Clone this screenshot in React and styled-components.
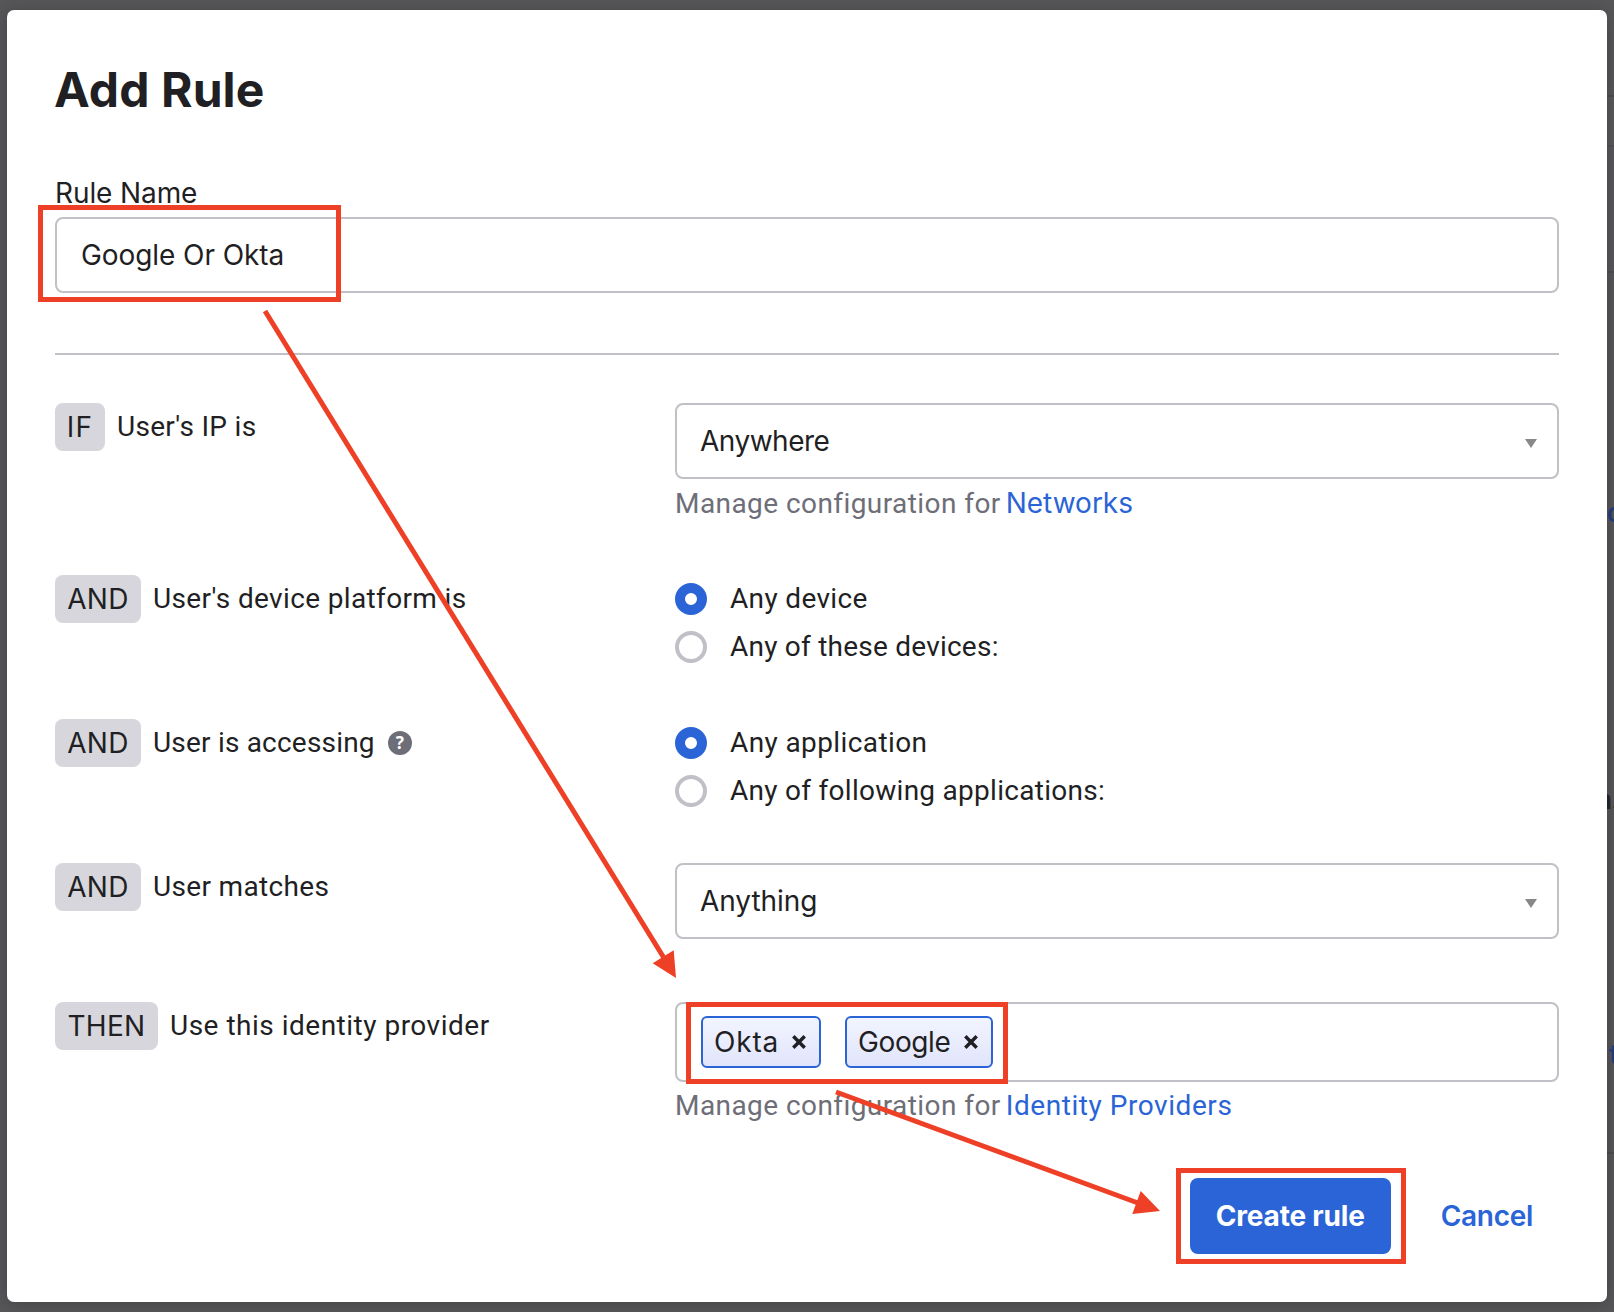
import React from "react";
import styled, { createGlobalStyle } from "styled-components";

const color = {
  text: "#1f1f24",
  muted: "#6e6e78",
  border: "#c0c0c7",
  blue: "#2a64d6",
  red: "#ee4026",
  badge: "#d7d6dc",
};

const GlobalStyle = createGlobalStyle`
  *, *::before, *::after { box-sizing: border-box; }
  html, body { margin: 0; padding: 0; background: #565658; overflow: hidden; }
  body {
    font-family: Roboto, "Liberation Sans", sans-serif;
    font-size: 28px;
    line-height: 48px;
    color: ${color.text};
    white-space: nowrap;
    -webkit-font-smoothing: antialiased;
  }
`;

const Page = styled.div`
  position: relative;
  display: flex;
  align-items: flex-start;
  width: 1614px;
  height: 1312px;
  padding-left: 7px;
  overflow: hidden;
  background: #565658;
`;

const Modal = styled.main`
  position: relative;
  z-index: 1;
  flex: none;
  width: 1600px;
  height: 1292px;
  margin-top: 10px;
  padding: 52px 48px 0;
  border-radius: 7px;
  background: #fff;
  box-shadow: 0 2px 14px rgba(0, 0, 0, 0.2);
`;

const Behind = styled.aside`
  flex: none;
  display: flex;
  flex-direction: column;
  width: 7px;
  height: 1312px;
  overflow: hidden;
`;

const Band = styled.div`
  flex: none;
  height: ${(p) => p.$h}px;
  background: ${(p) => p.$bg || "transparent"};
`;

const Fragment = styled.span`
  flex: none;
  display: block;
  height: 48px;
  margin-left: ${(p) => p.$x}px;
  font-weight: ${(p) => (p.$dark ? 700 : 500)};
  color: ${(p) => (p.$dark ? "#26262b" : "#233f78")};
`;

const Title = styled.h1`
  margin: 0 0 51px -1px;
  font: 700 48px/56px Inter, sans-serif;
  letter-spacing: 0.1px;
`;

const Txt = styled.span`
  letter-spacing: ${(p) => p.$ls || 0}px;
  ${(p) => p.$wide && "font-family: Inter, sans-serif;"}
`;

const FieldLabel = styled.label`
  display: flex;
  height: 48px;
`;

const Box = styled.div`
  display: flex;
  align-items: center;
  height: ${(p) => p.$h || 76}px;
  padding: 0 ${(p) => (p.$tags ? 24 : 20)}px 0 24px;
  border: 2px solid ${color.border};
  border-radius: 8px;
`;

const SelectBox = styled(Box)`
  justify-content: space-between;
  & > span { margin: -1px 0 0 -1px; }
`;

const Caret = styled.i`
  width: 12px;
  height: 9px;
  margin-top: 5px;
  background: #888;
  clip-path: polygon(0 0, 100% 0, 50% 100%);
`;

const Divider = styled.hr`
  height: 2px;
  margin: 60px 0 48px;
  border: 0;
  background: ${color.border};
`;

const Row = styled.section`
  display: grid;
  grid-template-columns: 620px 1fr;
  align-items: start;
  margin-bottom: ${(p) => p.$gap || 48}px;
`;

const Condition = styled.div`
  display: flex;
  align-items: center;
  height: 48px;
`;

const Badge = styled.span`
  display: flex;
  justify-content: center;
  width: ${(p) => p.$w}px;
  height: 48px;
  margin-right: 12px;
  border-radius: 8px;
  background: ${color.badge};
`;

const Help = styled.span`
  display: flex;
  align-items: center;
  justify-content: center;
  width: 24px;
  height: 24px;
  margin-left: 13px;
  border-radius: 50%;
  background: ${color.muted};
  color: #fff;
  font: 700 17px/24px "Noto Sans", sans-serif;
`;

const Hint = styled.p`
  display: flex;
  align-items: baseline;
  height: 48px;
  margin: 0;
  color: ${color.muted};
`;

const Link = styled.a`
  margin-left: 5px;
  color: ${color.blue};
`;

const Option = styled.label`
  display: flex;
  align-items: center;
  gap: 23px;
  height: 48px;
`;

const Radio = styled.span`
  width: 32px;
  height: 32px;
  border: ${(p) => (p.$on ? `10px solid ${color.blue}` : `4px solid ${color.border}`)};
  border-radius: 50%;
  background: #fff;
`;

const Tag = styled.span`
  display: flex;
  align-items: center;
  justify-content: space-between;
  width: ${(p) => p.$w}px;
  height: 52px;
  margin-right: 24px;
  padding: 0 13px 0 11px;
  border: 2px solid ${color.blue};
  border-radius: 6px;
  background: linear-gradient(#f2f4ff, #e1e5fb);
`;

const Footer = styled.footer`
  display: flex;
  justify-content: flex-end;
  align-items: center;
  padding-right: 26px;
  gap: 50px;
`;

const Button = styled.button`
  height: 76px;
  padding: 0;
  border: 0;
  border-radius: 8px;
  background: transparent;
  color: ${color.blue};
  font: 600 28px/48px Inter, sans-serif;
  letter-spacing: -0.3px;
`;

const PrimaryButton = styled(Button)`
  width: 201px;
  background: ${color.blue};
  color: #fff;
  font-weight: 700;
  letter-spacing: -0.2px;
`;

const Markup = styled.svg`
  position: absolute;
  inset: 0;
  z-index: 2;
  pointer-events: none;
`;

function TagX() {
  return (
    <svg width="14" height="14" viewBox="0 0 14 14" stroke={color.text} strokeWidth="3.4" fill="none">
      <path d="M1.3 1.2 L12.7 12.8 M12.7 1.2 L1.3 12.8" />
    </svg>
  );
}

function If({ word, w, wls, ls, children, help }) {
  return (
    <Condition>
      <Badge $w={w}><Txt $wide $ls={wls}>{word}</Txt></Badge>
      <Txt $ls={ls}>{children}</Txt>
      {help && <Help>?</Help>}
    </Condition>
  );
}

function Select({ ls, children }) {
  return (
    <SelectBox>
      <Txt $wide $ls={ls}>{children}</Txt>
      <Caret />
    </SelectBox>
  );
}

function Choice({ on, ls, children }) {
  return (
    <Option>
      <Radio $on={on} />
      <Txt $ls={ls}>{children}</Txt>
    </Option>
  );
}

function Manage({ ls, wide, children }) {
  return (
    <Hint>
      <Txt $ls={0.43}>Manage configuration for</Txt>
      <Link><Txt $wide={wide} $ls={ls}>{children}</Txt></Link>
    </Hint>
  );
}

export default function App() {
  return (
    <Page>
      <GlobalStyle />
      <Modal>
        <Title>Add Rule</Title>
        <FieldLabel><Txt $wide $ls={-0.1}>Rule Name</Txt></FieldLabel>
        <Box><Txt $wide $ls={-0.08}>Google Or Okta</Txt></Box>
        <Divider />

        <Row>
          <If word="IF" w={50} wls={1.2} ls={0.3}>User's IP is</If>
          <div>
            <Select ls={-0.5}>Anywhere</Select>
            <Manage wide ls={0}>Networks</Manage>
          </div>
        </Row>
        <Row>
          <If word="AND" w={86} wls={0.3} ls={0.36}>User's device platform is</If>
          <div>
            <Choice on ls={0.34}>Any device</Choice>
            <Choice ls={0.23}>Any of these devices:</Choice>
          </div>
        </Row>
        <Row>
          <If word="AND" w={86} wls={0.3} ls={0.2} help>User is accessing</If>
          <div>
            <Choice on ls={0.39}>Any application</Choice>
            <Choice ls={0.28}>Any of following applications:</Choice>
          </div>
        </Row>
        <Row $gap={63}>
          <If word="AND" w={86} wls={0.3} ls={0.34}>User matches</If>
          <Select ls={-0.05}>Anything</Select>
        </Row>
        <Row>
          <If word="THEN" w={103} wls={0.3} ls={0.5}>Use this identity provider</If>
          <div>
            <Box $h={80} $tags>
              <Tag $w={120}><Txt $wide $ls={0.8}>Okta</Txt><TagX /></Tag>
              <Tag $w={148}><Txt $wide $ls={-0.4}>Google</Txt><TagX /></Tag>
            </Box>
            <Manage ls={0.56}>Identity Providers</Manage>
          </div>
        </Row>

        <Footer>
          <PrimaryButton>Create rule</PrimaryButton>
          <Button>Cancel</Button>
        </Footer>
      </Modal>

      <Behind>
        <Band $h={95} />
        <Band $h={2} $bg="#4b4b4e" />
        <Band $h={48} $bg="#58585a" />
        <Band $h={2} $bg="#504f54" />
        <Band $h={124} $bg="#57565a" />
        <Band $h={2} $bg="#4e4d54" />
        <Band $h={216} />
        <Fragment $x={0}>c</Fragment>
        <Band $h={239} />
        <Fragment $x={-11} $dark>n.</Fragment>
        <Band $h={207} />
        <Fragment $x={2}>t</Fragment>
        <Band $h={73} />
        <Band $h={2} $bg="#4b4b4e" />
      </Behind>

      <Markup width="1614" height="1312" viewBox="0 0 1614 1312" fill="none" stroke={color.red} strokeWidth="5">
        <rect x="40.5" y="207.5" width="298" height="92" />
        <rect x="688.5" y="1004.5" width="317" height="77" />
        <rect x="1178.5" y="1170.5" width="225" height="91" />
        <path d="M265 311 L664 958" />
        <path d="M836 1092 L1138 1203" />
        <path d="M676 978 L673.7 950.3 L652.7 963.3 Z M1160 1211 L1140.7 1191 L1132.3 1214 Z" fill={color.red} stroke="none" />
      </Markup>
    </Page>
  );
}
